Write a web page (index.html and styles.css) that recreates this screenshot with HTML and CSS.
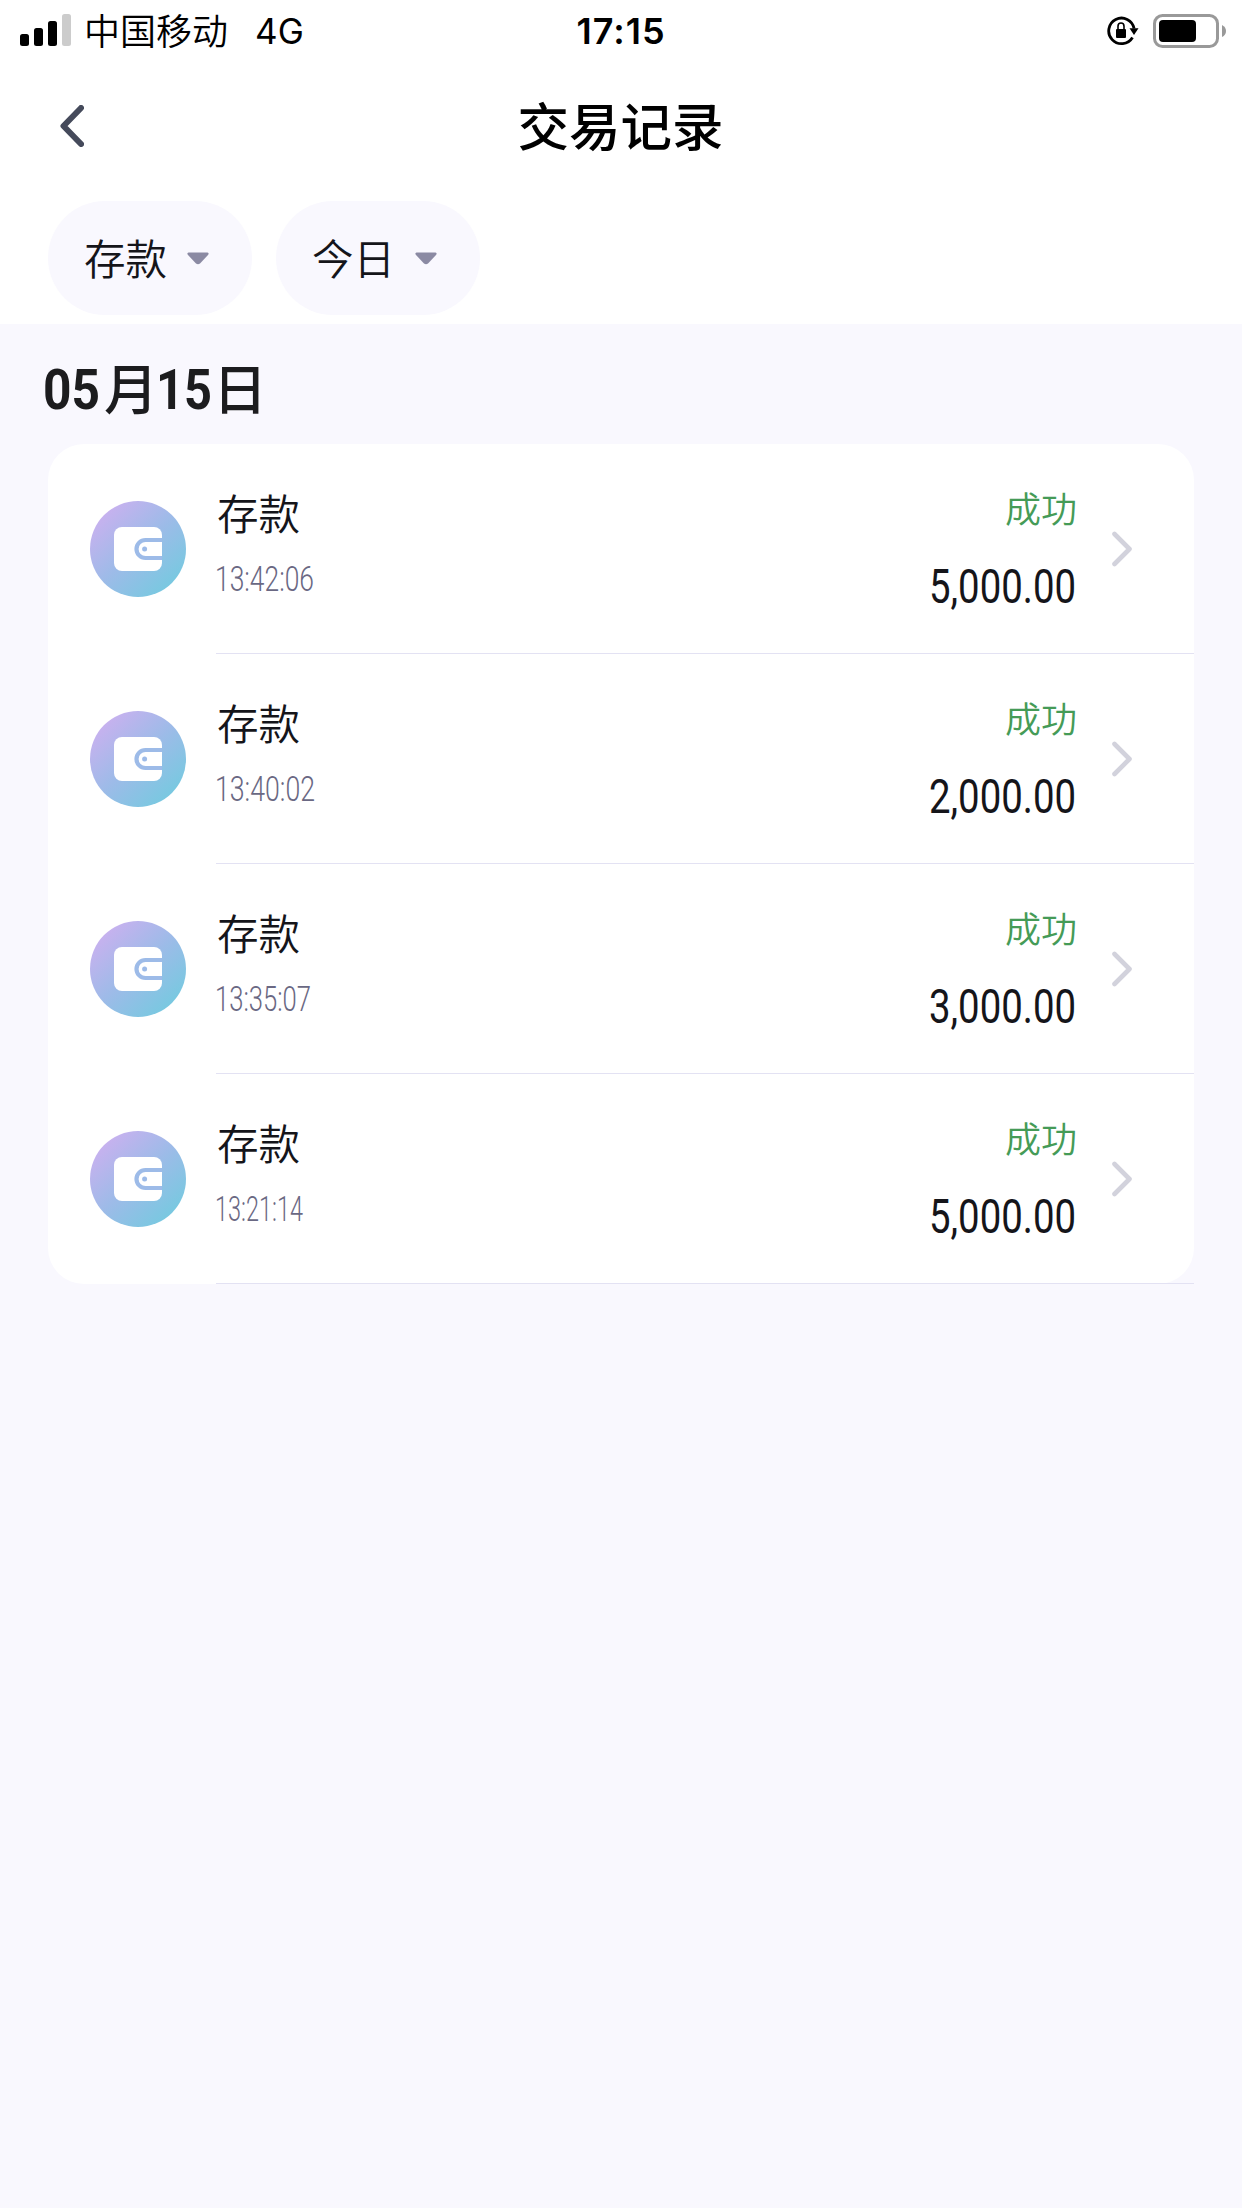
FILE: index.html
```html
<!DOCTYPE html>
<html lang="zh-CN">
<head>
<meta charset="utf-8">
<title>交易记录</title>
<link rel="stylesheet" href="styles.css">
</head>
<body>
<svg width="0" height="0" class="defs" aria-hidden="true">
  <defs>
    <linearGradient id="coin" x1="0.12" y1="0.12" x2="0.85" y2="0.9">
      <stop offset="0" stop-color="#c9b1ef"/>
      <stop offset="0.5" stop-color="#9dbbe8"/>
      <stop offset="1" stop-color="#77c9e0"/>
    </linearGradient>
    <symbol id="wallet" viewBox="0 0 96 96">
      <circle cx="48" cy="48" r="48" fill="url(#coin)"/>
      <rect x="24" y="26" width="48" height="44" rx="8" fill="#fff"/>
      <path d="M72 39H55.5a9 9 0 0 0 0 18H72" fill="none" stroke="#9dbbe8" stroke-width="4.2"/>
      <circle cx="54.6" cy="48" r="2.5" fill="#9dbbe8"/>
    </symbol>
    <symbol id="next" viewBox="0 0 20 36">
      <path d="M2.5 3L17.5 18L2.5 33" fill="none" stroke="#d2d2dc" stroke-width="4.6" stroke-linecap="round" stroke-linejoin="round"/>
    </symbol>
  </defs>
</svg>
<header class="top">
  <div class="status">
    <div class="carrier">
      <svg class="signal" width="51" height="33" viewBox="0 0 51 33">
        <rect x="0" y="20" width="9" height="12" rx="2.5"/>
        <rect x="14" y="14" width="9" height="18" rx="2.5"/>
        <rect x="28" y="7" width="9" height="25" rx="2.5"/>
        <rect x="42" y="0" width="9" height="32" rx="2.5" fill="#ccc"/>
      </svg>
      <span class="operator">中国移动</span>
      <span class="network">4G</span>
    </div>
    <div class="clock">17:15</div>
    <div class="indicators">
      <svg width="32" height="32" viewBox="0 0 32 32">
        <path d="M25.500 22.500A12.800 12.800 0 1 1 27.100 13.500" fill="none" stroke="#000" stroke-width="2.8"/>
        <path d="M22.500 13.200H31.500L27 20Z"/>
        <rect x="9" y="14" width="10" height="9" rx="1"/>
        <path d="M11 15V11.200a3 3.200 0 0 1 6 0V15" fill="none" stroke="#000" stroke-width="1.6"/>
      </svg>
      <svg width="74" height="34" viewBox="0 0 74 34">
        <rect x="1.500" y="1.500" width="63" height="31" rx="8" fill="none" stroke="#999" stroke-width="3"/>
        <rect x="6" y="6" width="37" height="22" rx="4"/>
        <path d="M69 11q4 2 4 6t-4 6Z" fill="#999"/>
      </svg>
    </div>
  </div>
  <div class="navbar">
    <svg class="back" width="24" height="42" viewBox="0 0 24 42">
      <path d="M21 3L3.500 21L21 39" fill="none" stroke="#454a5b" stroke-width="6" stroke-linecap="round" stroke-linejoin="round"/>
    </svg>
    <h1 class="title">交易记录</h1>
  </div>
  <div class="filters">
    <div class="pill"><span>存款</span><svg width="22" height="13" viewBox="0 0 22 13"><path d="M1.500 0.500H20.500Q22.500 1 21 3L13 11.500Q11 13 9 11.500L1 3Q-0.500 1 1.500 0.500Z" fill="#8b8aa3"/></svg></div>
    <div class="pill"><span>今日</span><svg width="22" height="13" viewBox="0 0 22 13"><path d="M1.500 0.500H20.500Q22.500 1 21 3L13 11.500Q11 13 9 11.500L1 3Q-0.500 1 1.500 0.500Z" fill="#8b8aa3"/></svg></div>
  </div>
</header>
<main>
  <h2 class="date">
    <svg width="61" height="60"><text x="0" y="50" textLength="57" lengthAdjust="spacingAndGlyphs">05</text></svg><span>月</span><svg width="55" height="60"><text x="-2" y="50" textLength="56" lengthAdjust="spacingAndGlyphs">15</text></svg><span>日</span>
  </h2>
  <div class="list">
    <div class="row">
      <svg class="icon"><use href="#wallet"/></svg>
      <div class="body">
        <div class="kind"><div class="name">存款</div><svg class="time"><text x="-1" y="32" textLength="99" lengthAdjust="spacingAndGlyphs">13:42:06</text></svg></div>
        <div class="result"><div class="state">成功</div><svg class="amount"><text x="4" y="40" textLength="147" lengthAdjust="spacingAndGlyphs">5,000.00</text></svg></div>
        <svg class="next"><use href="#next"/></svg>
      </div>
    </div>
    <div class="row">
      <svg class="icon"><use href="#wallet"/></svg>
      <div class="body">
        <div class="kind"><div class="name">存款</div><svg class="time"><text x="-1" y="32" textLength="100" lengthAdjust="spacingAndGlyphs">13:40:02</text></svg></div>
        <div class="result"><div class="state">成功</div><svg class="amount"><text x="4" y="40" textLength="147" lengthAdjust="spacingAndGlyphs">2,000.00</text></svg></div>
        <svg class="next"><use href="#next"/></svg>
      </div>
    </div>
    <div class="row">
      <svg class="icon"><use href="#wallet"/></svg>
      <div class="body">
        <div class="kind"><div class="name">存款</div><svg class="time"><text x="-1" y="32" textLength="96" lengthAdjust="spacingAndGlyphs">13:35:07</text></svg></div>
        <div class="result"><div class="state">成功</div><svg class="amount"><text x="4" y="40" textLength="147" lengthAdjust="spacingAndGlyphs">3,000.00</text></svg></div>
        <svg class="next"><use href="#next"/></svg>
      </div>
    </div>
    <div class="row">
      <svg class="icon"><use href="#wallet"/></svg>
      <div class="body">
        <div class="kind"><div class="name">存款</div><svg class="time"><text x="-1" y="32" textLength="88" lengthAdjust="spacingAndGlyphs">13:21:14</text></svg></div>
        <div class="result"><div class="state">成功</div><svg class="amount"><text x="4" y="40" textLength="147" lengthAdjust="spacingAndGlyphs">5,000.00</text></svg></div>
        <svg class="next"><use href="#next"/></svg>
      </div>
    </div>
  </div>
</main>
</body>
</html>
```
FILE: styles.css
```css
* { box-sizing: border-box; }
body {
  margin: 0;
  min-height: 2208px;
  background: #f9f8fe;
  color: #15151a;
  font-family: "Inter", "Noto Sans CJK SC", sans-serif;
}
svg { display: block; flex: none; }
.defs { position: absolute; }
h1, h2 { margin: 0; }

.top { height: 324px; background: #fff; }
.status {
  height: 61px;
  display: grid;
  grid-template-columns: 1fr auto 1fr;
  align-items: center;
  padding: 0 15px 0 20px;
  color: #000;
}
.carrier { display: flex; align-items: center; }
.operator { margin-left: 13px; padding-bottom: 4px; font: 350 36px/56px "Noto Sans CJK SC", sans-serif; }
.network { margin-left: 27px; font-size: 35px; line-height: 60px; padding-top: 1px; }
.clock { margin-right: 5px; padding-top: 1px; font-size: 36px; font-weight: 600; line-height: 59px; letter-spacing: 1px; }
.indicators { display: flex; justify-content: flex-end; align-items: center; gap: 14px; }

.navbar {
  height: 140px;
  display: grid;
  grid-template-columns: 1fr auto 1fr;
  align-items: center;
  padding: 0 61px 10px 60px;
}
.title { padding-bottom: 5px; font: 500 51.500px/72px "Noto Sans CJK SC", sans-serif; color: #000; }

.filters { display: flex; gap: 24px; padding-left: 48px; }
.pill {
  width: 204px;
  height: 114px;
  border-radius: 57px;
  background: #f9f8fe;
  display: flex;
  align-items: center;
  gap: 20px;
  padding-left: 36px;
  font: 350 41.500px/60px "Noto Sans CJK SC", sans-serif;
}
.pill span { padding-bottom: 2px; }

.date {
  height: 120px;
  display: flex;
  align-items: center;
  padding: 10px 0 0 43px;
  color: #1c1c1e;
  font: 500 54px/60px "Noto Sans CJK SC", sans-serif;
}
.date span { padding-bottom: 4px; }
.date svg { overflow: visible; }
.date text { font: 700 55px "Roboto", sans-serif; fill: #1c1c1e; }

.list { margin: 0 48px; height: 840px; border-radius: 36px; background: #fff; }
.row { height: 210px; display: flex; padding-left: 42px; }
.icon { width: 96px; height: 96px; margin-top: 57px; }
.body {
  flex: 1;
  margin-left: 30px;
  display: flex;
  border-bottom: 1px solid #e3e2f3;
}
.kind { flex: 1; padding-top: 38px; }
.name { padding-left: 1px; font: 350 41.500px/60px "Noto Sans CJK SC", sans-serif; }
.time { width: 110px; height: 40px; margin-top: 17px; overflow: visible; }
.time text { font: 300 35.500px "Roboto", sans-serif; fill: #6a6883; }
.result { display: flex; flex-direction: column; align-items: flex-end; padding-top: 37px; }
.state { font: 350 36px/52px "Noto Sans CJK SC", sans-serif; color: #459b57; }
.amount { width: 152px; height: 50px; margin-top: 30px; overflow: visible; }
.amount text { font: 400 48px "Roboto", sans-serif; fill: #15151a; }
.next { width: 20px; height: 36px; margin: 87px 62px 0 35px; }
```
